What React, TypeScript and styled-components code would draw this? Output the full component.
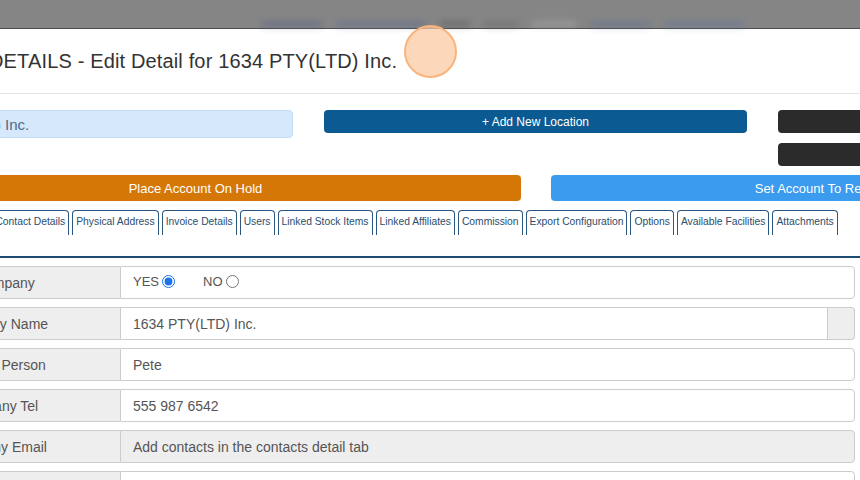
import React from "react";
import styled, { createGlobalStyle } from "styled-components";

const Global = createGlobalStyle`
  html, body { margin: 0; padding: 0; background: #ffffff; }
  body { font-family: "Liberation Sans", Arial, sans-serif; color: #333; }
  * { box-sizing: border-box; }
`;

const Screen = styled.div`
  position: relative;
  width: 860px;
  height: 480px;
  overflow: hidden;
  background: #fff;
`;

const TopBar = styled.div`
  height: 29px;
  background: #858585;
  border-bottom: 1px solid #4d4d4d;
  display: flex;
  align-items: flex-end;
  padding: 0 0 1px 262px;
  gap: 14px;
`;

const Blur = styled.span<{ $w: number; $c: string }>`
  display: block;
  width: ${(p) => p.$w}px;
  height: 6px;
  background: ${(p) => p.$c};
  filter: blur(3px);
  opacity: 0.45;
`;

const Shift = styled.div`
  margin-left: -130px;
  width: 1331px;
`;

const Header = styled.div`
  height: 65px;
  border-bottom: 1px solid #e5e5e5;
  display: flex;
  align-items: center;
  padding-left: 119px;
`;

const Title = styled.h4`
  margin: 0;
  font-size: 20px;
  letter-spacing: 0.15px;
  font-weight: 400;
  color: #333;
  white-space: nowrap;
`;

const Body = styled.div`
  padding-top: 16px;
`;

const ThreeCols = styled.div`
  display: grid;
  grid-template-columns: 423px 423px 423px;
  column-gap: 31px;
  align-items: start;
`;

const NameInput = styled.div`
  height: 28px;
  background: #d6e8fb;
  border: 1px solid #c4dcf4;
  border-radius: 4px;
  display: flex;
  align-items: center;
  padding-left: 26px;
  font-size: 15px;
  color: #4d6b88;
  white-space: nowrap;
`;

const Stack = styled.div`
  display: flex;
  flex-direction: column;
  gap: 10px;
`;

const Btn = styled.div<{ $bg: string; $h: number; $size: number }>`
  height: ${(p) => p.$h}px;
  background: ${(p) => p.$bg};
  border-radius: 4px;
  color: #fff;
  font-size: ${(p) => p.$size}px;
  display: flex;
  align-items: center;
  justify-content: center;
  white-space: nowrap;
`;

const TwoCols = styled.div`
  display: grid;
  grid-template-columns: 651px 650px;
  column-gap: 30px;
  margin-top: 9px;
`;

const TabNav = styled.div`
  margin-top: 9px;
  height: 48px;
  border-bottom: 2px solid #1f4b72;
  display: flex;
  align-items: flex-start;
  gap: 3px;
  padding-left: 32px;
`;

const Tab = styled.div`
  height: 25px;
  border: 1px solid #2a5680;
  border-bottom: none;
  border-radius: 4px 4px 0 0;
  padding: 5px 3px 0;
  font-size: 10.3px;
  color: #2b4d6e;
  white-space: nowrap;
`;

const Form = styled.div`
  margin-top: 8px;
  margin-left: 10px;
  width: 975px;
  display: flex;
  flex-direction: column;
  gap: 8px;
`;

const Group = styled.div`
  display: flex;
  height: 33px;
`;

const Label = styled.div`
  width: 240px;
  flex: none;
  background: #eeeeee;
  border: 1px solid #cccccc;
  border-right: none;
  border-radius: 4px 0 0 4px;
  display: flex;
  align-items: center;
  justify-content: center;
  padding-right: 6px;
  font-size: 14px;
  color: #555;
  white-space: nowrap;
`;

const Value = styled.div<{ $readonly?: boolean; $addon?: boolean }>`
  flex: 1;
  background: ${(p) => (p.$readonly ? "#eeeeee" : "#ffffff")};
  border: 1px solid #cccccc;
  border-radius: ${(p) => (p.$addon ? "0" : "0 4px 4px 0")};
  display: flex;
  align-items: center;
  padding-left: 12px;
  font-size: 14px;
  color: #555;
  white-space: nowrap;
`;

const Addon = styled.div`
  width: 27px;
  flex: none;
  background: #eeeeee;
  border: 1px solid #cccccc;
  border-left: none;
  border-radius: 0 4px 4px 0;
`;

const RadioLabel = styled.label<{ $gap: number }>`
  display: flex;
  align-items: center;
  margin-right: ${(p) => p.$gap}px;
  font-size: 13px;
  color: #555;
  margin-top: -2px;
  input {
    margin: 0 0 0 3px;
    width: 13px;
    height: 13px;
    accent-color: #1a73e8;
  }
`;

const Marker = styled.div`
  position: absolute;
  left: 404px;
  top: 25px;
  width: 53px;
  height: 53px;
  border-radius: 50%;
  background: rgba(252, 200, 160, 0.72);
  border: 2px solid #f9b47c;
`;

const tabs = [
  "Company Details",
  "Contact Details",
  "Physical Address",
  "Invoice Details",
  "Users",
  "Linked Stock Items",
  "Linked Affiliates",
  "Commission",
  "Export Configuration",
  "Options",
  "Available Facilities",
  "Attachments",
];

export default function App() {
  return (
    <Screen>
      <Global />
      <TopBar>
        <Blur $w={60} $c="#4d5d86" />
        <Blur $w={90} $c="#5a6890" />
        <Blur $w={30} $c="#555" />
        <Blur $w={34} $c="#666" />
        <Blur $w={44} $c="#b0b0b0" />
        <Blur $w={60} $c="#5b6c95" />
        <Blur $w={80} $c="#62719a" />
      </TopBar>
      <Shift>
        <Header>
          <Title>DETAILS - Edit Detail for 1634 PTY(LTD) Inc.</Title>
        </Header>
        <Body>
          <ThreeCols>
            <NameInput>1634 PTY(LTD) Inc.</NameInput>
            <Btn $bg="#0b5a91" $h={23} $size={12}>+ Add New Location</Btn>
            <Stack>
              <Btn $bg="#2b2b2b" $h={23} $size={12} />
              <Btn $bg="#2b2b2b" $h={23} $size={12} />
            </Stack>
          </ThreeCols>
          <TwoCols>
            <Btn $bg="#d57707" $h={26} $size={13}>Place Account On Hold</Btn>
            <Btn $bg="#3a9bef" $h={26} $size={13}>Set Account To Require Order References</Btn>
          </TwoCols>
          <TabNav>
            {tabs.map((t) => (
              <Tab key={t}>{t}</Tab>
            ))}
          </TabNav>
          <Form>
            <Group>
              <Label>Is Company</Label>
              <Value>
                <RadioLabel $gap={28}>
                  YES <input type="radio" name="co" defaultChecked />
                </RadioLabel>
                <RadioLabel $gap={0}>
                  NO <input type="radio" name="co" />
                </RadioLabel>
              </Value>
            </Group>
            <Group>
              <Label>Company Name</Label>
              <Value $addon>1634 PTY(LTD) Inc.</Value>
              <Addon />
            </Group>
            <Group>
              <Label>Contact Person</Label>
              <Value>Pete</Value>
            </Group>
            <Group>
              <Label>Company Tel</Label>
              <Value>555 987 6542</Value>
            </Group>
            <Group>
              <Label>Company Email</Label>
              <Value $readonly>Add contacts in the contacts detail tab</Value>
            </Group>
            <Group>
              <Label>Account Number</Label>
              <Value />
            </Group>
          </Form>
        </Body>
      </Shift>
      <Marker />
    </Screen>
  );
}
